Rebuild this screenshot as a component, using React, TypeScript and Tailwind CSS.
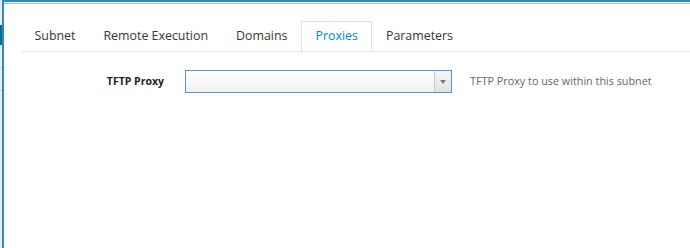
import { useState } from 'react';

const tabs = ['Subnet', 'Remote Execution', 'Domains', 'Proxies', 'Parameters'];

const App = () => {
  const [active, setActive] = useState('Proxies');

  return (
    <div className="flex h-[248px] w-[690px] overflow-hidden bg-white font-['Open_Sans',sans-serif]">
      {/* page behind the dialog */}
      <div className="flex w-[2px] flex-col bg-[#ececec]">
        <div className="h-[25px]" />
        <div className="h-[20px] bg-[#0a6a9a]" />
        <div className="h-[23px] border-b border-[#d1d1d1]" />
        <div className="h-[23px] border-b border-[#d1d1d1]" />
      </div>
      <div className="flex flex-1 flex-col border-l-2 border-t-[2px] border-[#2b8ac0] pt-[1px]">
        <div className="border-t border-[#9ec6d9]" />
        <div className="ml-[16.5px] mt-[17px] flex border-b border-[#e5e5e5]">
          {tabs.map((tab) => {
            const isActive = tab === active;
            return (
              <button
                key={tab}
                onClick={() => setActive(tab)}
                className={
                  isActive
                    ? 'relative -mb-px h-[30px] border border-b-white border-[#e0e0e0] bg-white px-[13px] text-[12.4px] text-[#0088ce]'
                    : 'h-[30px] border border-transparent px-[13px] text-[12.4px] text-[#363636]'
                }
              >
                {tab}
              </button>
            );
          })}
        </div>
        <div className="mt-[18px] flex items-center">
          <label className="w-[181px] pr-[21px] text-right text-[10.5px] font-bold text-[#222]">
            TFTP Proxy
          </label>
          <div className="flex h-[23px] w-[267px] border border-[#5a8ee6] bg-gradient-to-b from-white to-[#f1f1f1]">
            <div className="flex-1" />
            <div className="flex w-[17px] items-center justify-center border-l border-[#c9c9c9] bg-gradient-to-b from-[#f7f7f7] to-[#e2e2e2]">
              <span className="h-0 w-0 border-x-[3px] border-t-[4px] border-x-transparent border-t-[#777]" />
            </div>
          </div>
          <span className="ml-[18px] text-[10.8px] text-[#666]">TFTP Proxy to use within this subnet</span>
        </div>
      </div>
    </div>
  );
};

export default App;
